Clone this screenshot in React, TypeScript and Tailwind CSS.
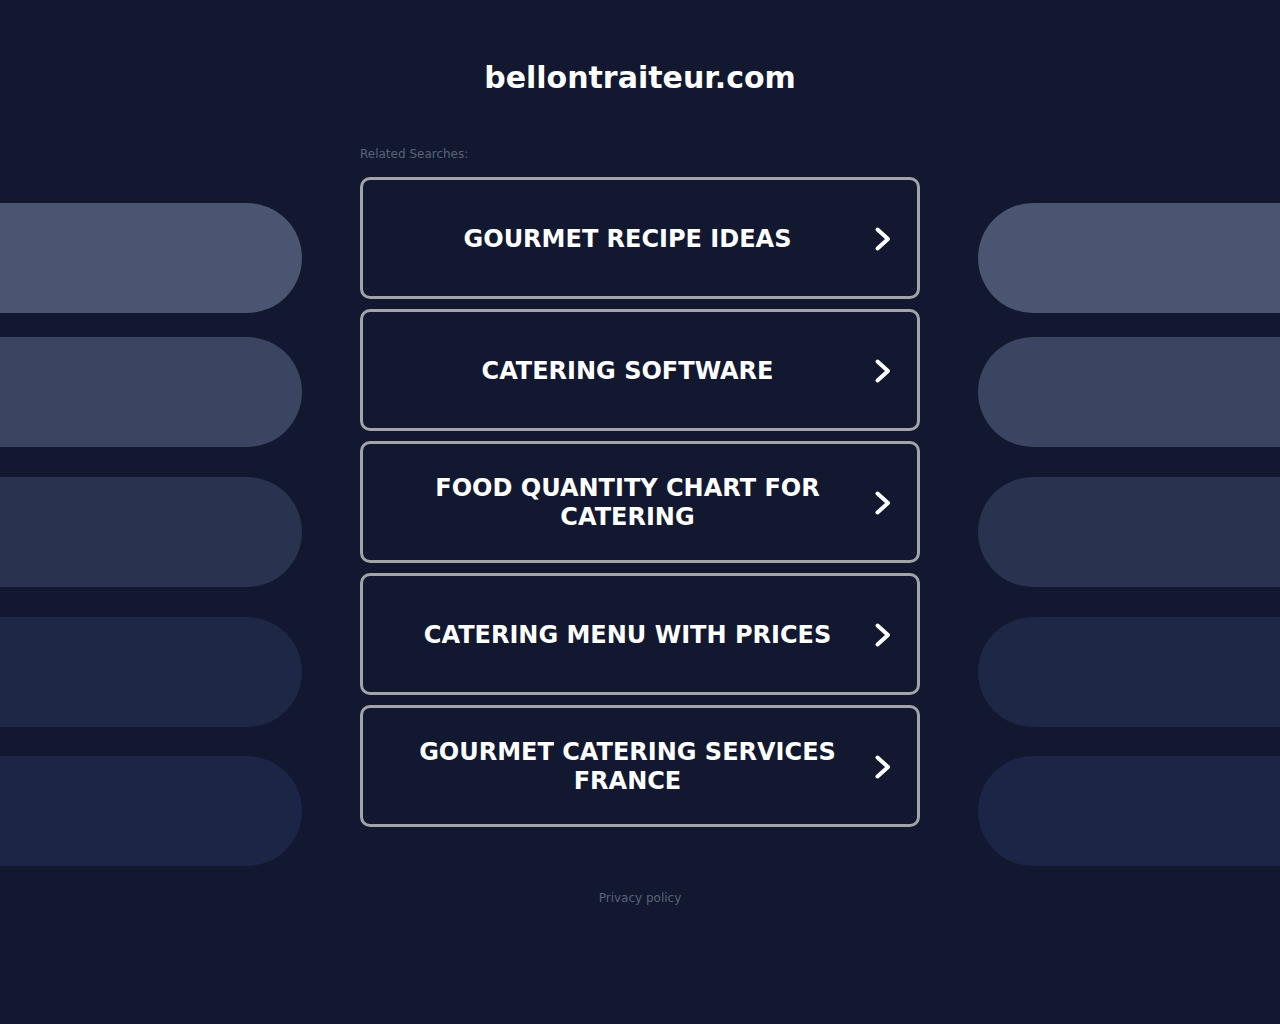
const searches = [
  'Gourmet Recipe Ideas',
  'Catering Software',
  'Food Quantity Chart for Catering',
  'Catering Menu with Prices',
  'Gourmet Catering Services France',
];

// decorative pills on both sides
const pills = [
  { color: 'bg-[#4b5572]', gap: 'mt-[63px]' },
  { color: 'bg-[#3b4460]', gap: 'mt-[24px]' },
  { color: 'bg-[#29324f]', gap: 'mt-[30px]' },
  { color: 'bg-[#1e2746]', gap: 'mt-[30px]' },
  { color: 'bg-[#1c2545]', gap: 'mt-[29px]' },
];

function SideColumn({ side }: { side: 'left' | 'right' }) {
  return (
    <div className="w-[302px] shrink-0 flex flex-col">
      {pills.map((p, i) => (
        <div
          key={i}
          className={`${p.gap} ${p.color} h-[110px] ${
            side === 'left' ? 'rounded-r-[55px]' : 'rounded-l-[55px]'
          }`}
        />
      ))}
    </div>
  );
}

function Chevron() {
  return (
    <svg width="18" height="26" viewBox="0 0 18 26" className="ml-[26px] shrink-0">
      <polyline
        points="3.5,3.5 14,13 3.5,22.5"
        fill="none"
        stroke="white"
        strokeWidth="4"
        strokeLinecap="round"
        strokeLinejoin="round"
      />
    </svg>
  );
}

export default function App() {
  return (
    <div
      className="min-h-[1024px] bg-[#121830] text-white"
      style={{ fontFamily: '"DejaVu Sans", sans-serif' }}
    >
      <div className="pt-[59px] h-[140px]">
        <h1 className="text-center text-[30px] font-bold leading-[38px]">bellontraiteur.com</h1>
      </div>

      <div className="flex justify-between">
        <SideColumn side="left" />

        <div className="w-[560px] shrink-0">
          <div className="pt-[2px] text-[12px] leading-[24px] text-[#5a6279]">Related Searches:</div>
          <div className="mt-[11px] flex flex-col gap-[10px]">
            {searches.map((s) => (
              <a
                key={s}
                href="#"
                className="h-[122px] flex items-center rounded-[10px] border-[3px] border-[#a2a4a9] pl-[44px] pr-[25px] pt-[2px]"
              >
                <span className="flex-1 text-center text-[24px] font-bold uppercase leading-[29px]">
                  {s}
                </span>
                <Chevron />
              </a>
            ))}
          </div>
          <div className="mt-[62px] text-center text-[12px] text-[#5a6279]">Privacy policy</div>
        </div>

        <SideColumn side="right" />
      </div>
    </div>
  );
}
